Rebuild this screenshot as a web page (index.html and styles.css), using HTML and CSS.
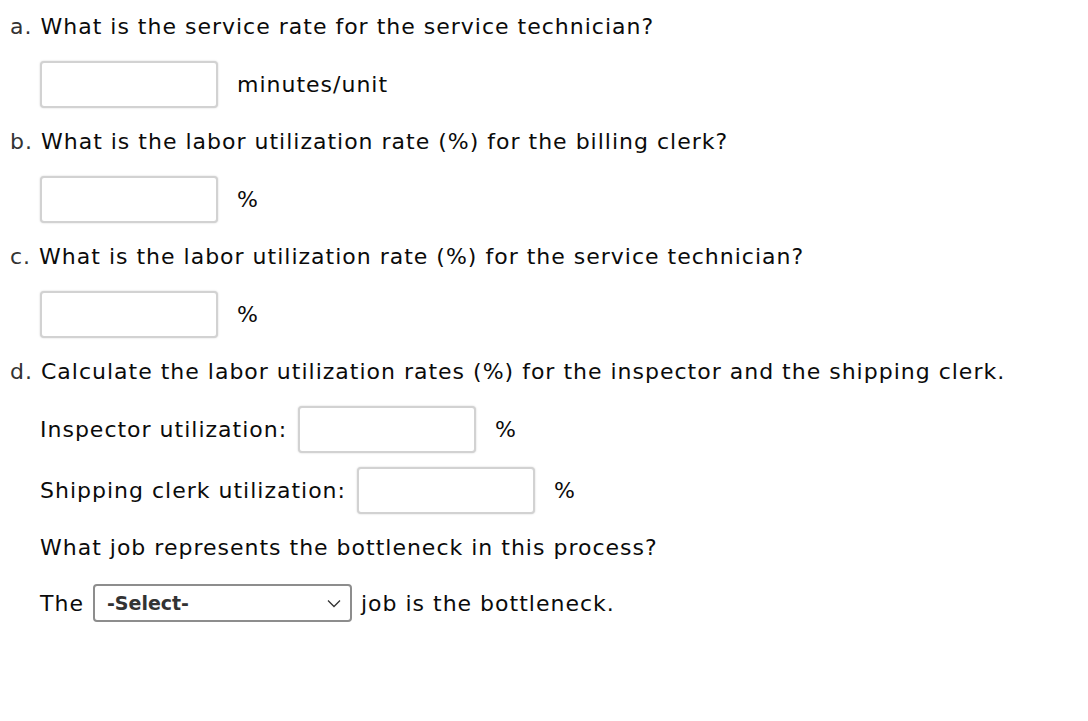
FILE: index.html
```html
<!DOCTYPE html>
<html>
<head>
<meta charset="utf-8">
<link rel="stylesheet" href="styles.css">
</head>
<body>
<div class="sheet">
  <p class="q"><span class="lbl">a.</span> What is the service rate for the service technician?</p>
  <div class="row sub"><input class="box" type="text"><span class="unit">minutes/unit</span></div>
  <p class="q"><span class="lbl">b.</span> What is the labor utilization rate (%) for the billing clerk?</p>
  <div class="row sub"><input class="box" type="text"><span class="unit">%</span></div>
  <p class="q"><span class="lbl">c.</span> What is the labor utilization rate (%) for the service technician?</p>
  <div class="row sub"><input class="box" type="text"><span class="unit">%</span></div>
  <p class="q"><span class="lbl">d.</span> Calculate the labor utilization rates (%) for the inspector and the shipping clerk.</p>
  <div class="row sub"><span class="field">Inspector utilization:</span><input class="box" type="text"><span class="unit">%</span></div>
  <div class="row sub tight"><span class="field">Shipping clerk utilization:</span><input class="box" type="text"><span class="unit">%</span></div>
  <p class="q sub">What job represents the bottleneck in this process?</p>
  <div class="row sub pick"><span>The</span>
    <div class="select"><span class="sel-text">-Select-</span>
      <svg class="chev" width="14" height="9" viewBox="0 0 14 9"><path d="M1 1.5 L7 7.5 L13 1.5" fill="none" stroke="#333" stroke-width="1.3"/></svg>
    </div>
    <span>job is the bottleneck.</span></div>
</div>
</body>
</html>
```
FILE: styles.css
```css
html, body {
  margin: 0;
  padding: 0;
  background: #fff;
}
body {
  font-family: "DejaVu Sans", Verdana, sans-serif;
  font-size: 22px;
  letter-spacing: 1px;
  color: #0b0b0b;
}
.sheet {
  display: flex;
  flex-direction: column;
  gap: 19px;
  padding: 12px 0 0 10px;
}
.q {
  margin: 0;
  height: 30px;
  line-height: 30px;
  white-space: nowrap;
}
.lbl {
  color: #333;
}
.sub {
  margin-left: 30px;
}
.row {
  display: flex;
  align-items: center;
  height: 47px;
  white-space: nowrap;
}
.tight {
  margin-top: -5px;
}
.field {
  margin-right: 11px;
}
.box {
  box-sizing: border-box;
  width: 178px;
  height: 47px;
  margin: 0;
  border: 2px solid #d2d2d2;
  border-radius: 4px;
  box-shadow: 0 0 2px rgba(0,0,0,0.18);
  background: #fff;
  outline: none;
  flex: none;
}
.unit {
  margin-left: 19px;
}
.pick {
  height: 38px;
  margin-top: 2px;
  gap: 9px;
}
.select {
  box-sizing: border-box;
  width: 259px;
  height: 38px;
  border: 2px solid #8d8d8d;
  border-radius: 4px;
  display: flex;
  align-items: center;
  justify-content: space-between;
  padding: 0 9px 0 12px;
  flex: none;
}
.sel-text {
  font-family: "DejaVu Sans", Verdana, sans-serif;
  font-weight: bold;
  font-size: 19px;
  letter-spacing: 0;
  color: #333;
}
.chev {
  display: block;
}
```
